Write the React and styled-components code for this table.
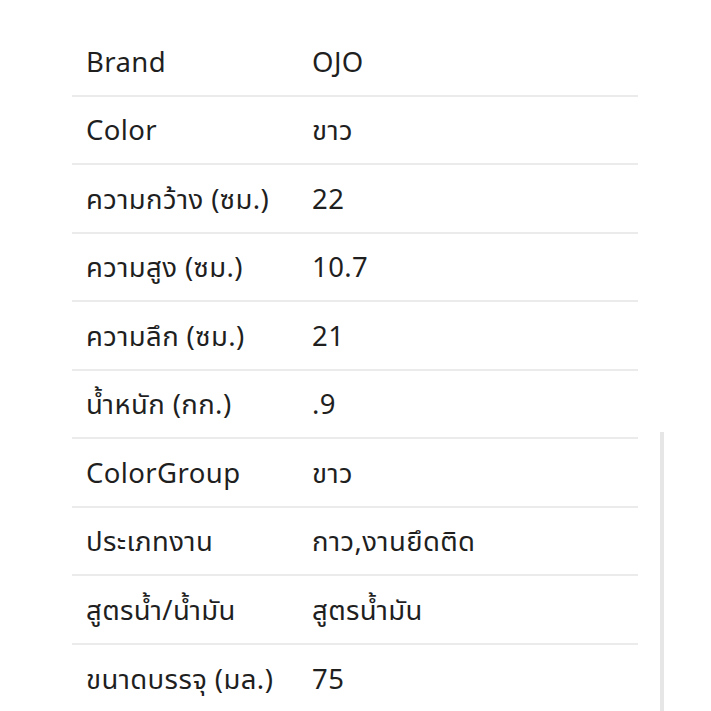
import React from 'react'
import styled, { createGlobalStyle } from 'styled-components'

const GlobalStyle = createGlobalStyle`
  html, body {
    margin: 0;
    padding: 0;
    background: #ffffff;
  }
  body {
    font-family: 'Noto Sans', 'Noto Sans Thai', 'DejaVu Sans', sans-serif;
    color: #222222;
  }
`

const Page = styled.div`
  position: relative;
  width: 711px;
  height: 711px;
  overflow: hidden;
  padding: 28px 73px 0 72px;
  box-sizing: border-box;
`

const Table = styled.div`
  display: flex;
  flex-direction: column;
`

const Row = styled.div`
  display: grid;
  grid-template-columns: 226px 1fr;
  align-items: center;
  height: 68.5px;
  padding: 0 14px;
  box-sizing: border-box;
  border-bottom: ${({ $last }) => ($last ? 'none' : '2px solid #ebebeb')};
`

const Cell = styled.div`
  font-size: 27.5px;
  line-height: 1;
  white-space: nowrap;
  letter-spacing: 0.4px;
  color: #1f1f1f;
`

const Scrollbar = styled.div`
  position: absolute;
  left: 660px;
  top: 432px;
  width: 4px;
  bottom: 0;
  background: #e6e6e6;
`

const specs = [
  ['Brand', 'OJO'],
  ['Color', 'ขาว'],
  ['ความกว้าง (ซม.)', '22'],
  ['ความสูง (ซม.)', '10.7'],
  ['ความลึก (ซม.)', '21'],
  ['น้ำหนัก (กก.)', '.9'],
  ['ColorGroup', 'ขาว'],
  ['ประเภทงาน', 'กาว,งานยึดติด'],
  ['สูตรน้ำ/น้ำมัน', 'สูตรน้ำมัน'],
  ['ขนาดบรรจุ (มล.)', '75'],
]

const App = () => (
  <>
    <GlobalStyle />
    <Page>
      <Table>
        {specs.map(([label, value], i) => (
          <Row key={label} $last={i === specs.length - 1}>
            <Cell>{label}</Cell>
            <Cell>{value}</Cell>
          </Row>
        ))}
      </Table>
      <Scrollbar />
    </Page>
  </>
)

export default App
